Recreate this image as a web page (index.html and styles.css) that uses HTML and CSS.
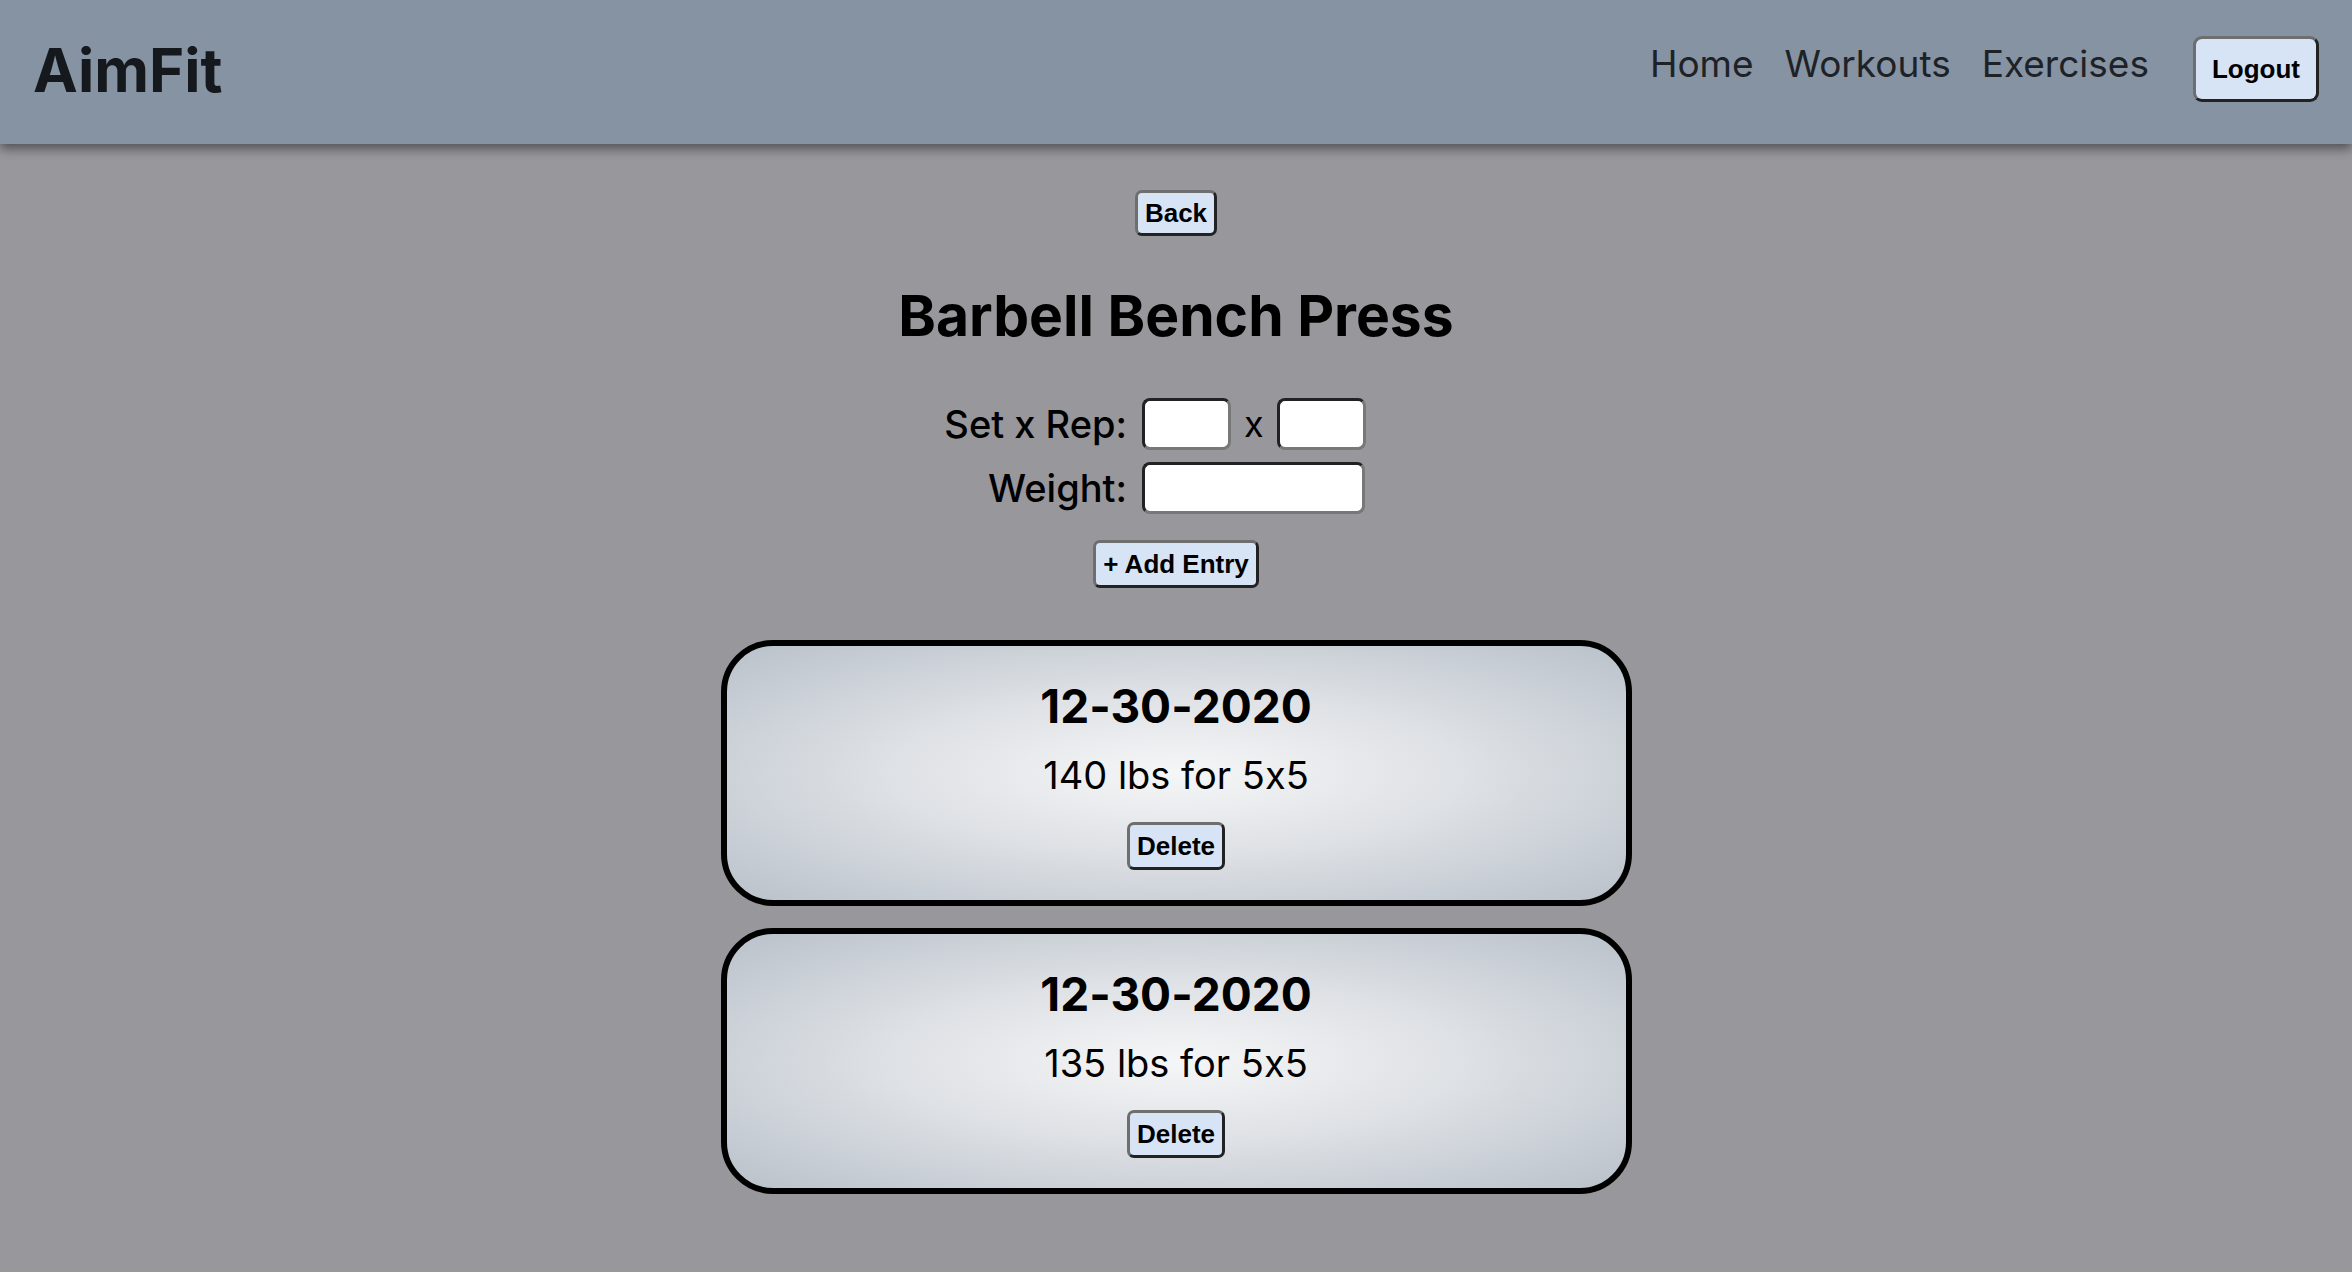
FILE: index.html
```html
<!DOCTYPE html>
<html lang="en">
  <head>
    <meta charset="UTF-8" />
    <title>AimFit - Barbell Bench Press</title>
    <meta name="viewport" content="width=device-width, initial-scale=1.0" />
    <link rel="stylesheet" href="styles.css">
  </head>

  <body>
    <header class="navbar">
      <a class="brand" href="#">AimFit</a>
      <nav class="nav-links">
        <a href="#">Home</a>
        <a href="#">Workouts</a>
        <a href="#">Exercises</a>
      </nav>
      <button class="btn btn-logout" type="button">Logout</button>
    </header>

    <main class="exercise">
      <button class="btn btn-back" type="button">Back</button>

      <h1 class="exercise-title">Barbell Bench Press</h1>

      <form class="entry-form" id="entryForm">
        <label class="entry-label" for="sets">Set x Rep:</label>
        <div class="entry-inputs">
          <input class="entry-input small" type="text" id="sets" />
          <span class="times">x</span>
          <input class="entry-input small" type="text" id="reps" />
        </div>
        <label class="entry-label" for="weight">Weight:</label>
        <div class="entry-inputs">
          <input class="entry-input" type="text" id="weight" />
        </div>
      </form>

      <button class="btn btn-add" type="submit" form="entryForm">+ Add Entry</button>

      <div class="entries">
        <div class="entry-card">
          <h2 class="entry-date">12-30-2020</h2>
          <p class="entry-detail">140 lbs for 5x5</p>
          <button class="btn btn-delete" type="button">Delete</button>
        </div>
        <div class="entry-card">
          <h2 class="entry-date">12-30-2020</h2>
          <p class="entry-detail">135 lbs for 5x5</p>
          <button class="btn btn-delete" type="button">Delete</button>
        </div>
      </div>
    </main>
  </body>
</html>
```

FILE: styles.css
```css
body {
  margin: 0;
  font-family: "Inter", "Noto Sans", sans-serif;
  font-feature-settings: "calt" 0;
  background-color: rgb(152, 151, 156);
  color: rgb(0, 0, 0);
}

.navbar {
  height: 144px;
  padding: 0 33px;
  display: flex;
  align-items: center;
  background-color: rgb(133, 147, 163);
  box-shadow: 0 5px 10px rgba(0, 0, 0, 0.45);
  box-sizing: border-box;
  position: relative;
}

.brand {
  font-size: 60px;
  font-weight: 700;
  color: rgb(21, 25, 29);
  text-decoration: none;
  margin-bottom: 4px;
}

.nav-links {
  margin-left: auto;
  margin-bottom: 17px;
  display: flex;
  gap: 31px;
}

.nav-links a {
  font-size: 37px;
  color: rgb(30, 34, 39);
  text-decoration: none;
}

.btn {
  font-family: "Liberation Sans", Arial, sans-serif;
  font-weight: 700;
  font-size: 26px;
  line-height: 30px;
  color: rgb(0, 0, 0);
  background-color: rgb(214, 228, 245);
  border: 3px solid;
  border-color: rgb(110, 110, 110) rgb(34, 34, 34) rgb(34, 34, 34) rgb(110, 110, 110);
  border-radius: 7px;
  padding: 6px 7px;
  cursor: pointer;
}

.btn-logout {
  margin-left: 44px;
  margin-bottom: 6px;
  padding: 15px 16px;
  border-radius: 9px;
}

.exercise {
  display: flex;
  flex-direction: column;
  align-items: center;
  padding: 46px 0 40px;
}

.btn-back {
  padding: 5px 7px;
}

.exercise-title {
  font-size: 57px;
  font-weight: 700;
  margin: 46px 0 48px;
  line-height: 68px;
}

.entry-form {
  display: grid;
  grid-template-columns: 183px 223px;
  column-gap: 15px;
  row-gap: 12px;
  align-items: center;
  padding-right: 43px;
}

.entry-label {
  font-size: 38px;
  font-weight: 500;
  text-align: right;
  white-space: nowrap;
}

.entry-inputs {
  display: flex;
  align-items: center;
  gap: 13px;
}

.times {
  font-size: 36px;
  line-height: 36px;
}

.entry-input {
  width: 223px;
  height: 52px;
  box-sizing: border-box;
  border: 3px solid;
  border-color: rgb(34, 34, 34) rgb(120, 120, 120) rgb(120, 120, 120) rgb(34, 34, 34);
  border-radius: 8px;
  background: rgb(255, 255, 255);
  padding: 0 8px;
  font-size: 24px;
}

.entry-input.small {
  width: 89px;
}

.btn-add {
  margin-top: 26px;
}

.entries {
  margin-top: 52px;
  display: flex;
  flex-direction: column;
  gap: 22px;
}

.entry-card {
  width: 911px;
  box-sizing: border-box;
  border: 6px solid rgb(0, 0, 0);
  border-radius: 52px;
  padding: 32px 0 30px;
  display: flex;
  flex-direction: column;
  align-items: center;
  background: radial-gradient(ellipse at center, rgb(245, 246, 247) 0%, rgb(222, 225, 229) 45%, rgb(185, 193, 202) 100%);
}

.entry-date {
  margin: 0;
  font-size: 46px;
  font-weight: 700;
  line-height: 56px;
}

.entry-detail {
  margin: 18px 0 24px;
  font-size: 38px;
  line-height: 46px;
}
```
